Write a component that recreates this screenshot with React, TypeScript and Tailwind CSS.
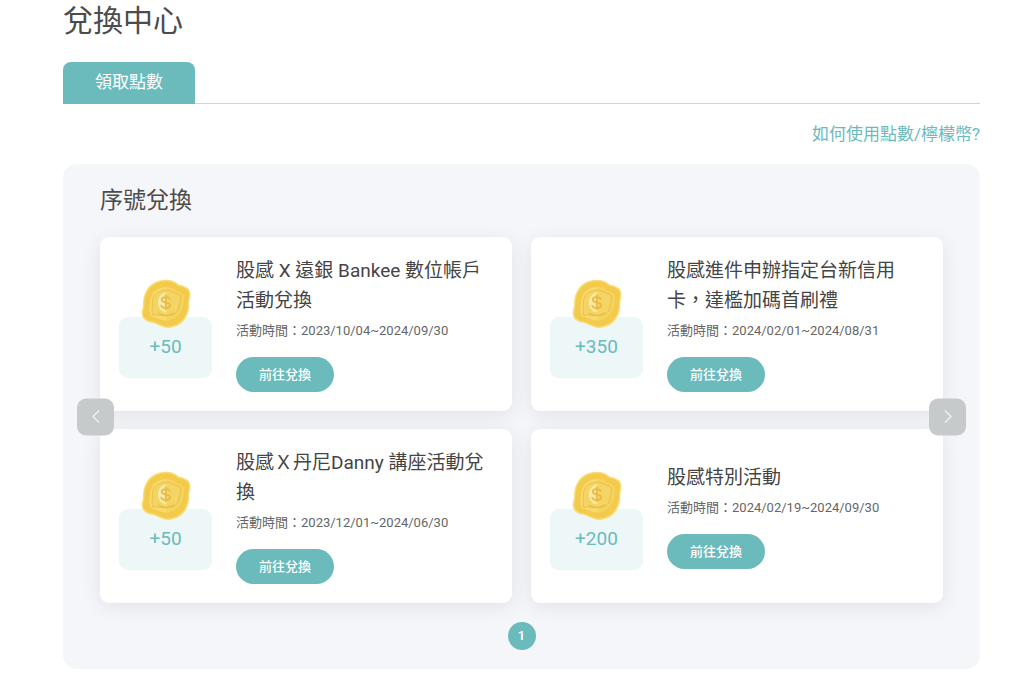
type Activity = {
  title: string;
  period: string;
  points: number;
};

const activities: Activity[] = [
  { title: "股感 X 遠銀 Bankee 數位帳戶\n活動兌換", period: "2023/10/04~2024/09/30", points: 50 },
  { title: "股感進件申辦指定台新信用\n卡，達檻加碼首刷禮", period: "2024/02/01~2024/08/31", points: 350 },
  { title: "股感Ｘ丹尼Danny 講座活動兌\n換", period: "2023/12/01~2024/06/30", points: 50 },
  { title: "股感特別活動", period: "2024/02/19~2024/09/30", points: 200 },
];

function Coin() {
  return (
    <svg viewBox="0 0 50 50" className="relative size-[50px]" aria-hidden="true">
      <path
        d="M25 .8C30.500 .8 34.500 2.500 38 5.800C44 6.300 49.500 9.500 49.500 15C49.500 18.500 48.300 21 48.300 25C48.300 32 46.500 38.500 41 43.500C36 48 30 49.500 24.500 48.700C19.500 48 16.500 45 11.500 43.800C5.500 43.500 .6 39.500 .6 34.500C.6 31.500 2 29 2 25C2 16.500 5 9.500 11 5C15 2 20 .8 25 .8Z"
        fill="#f8dc78"
      />
      <path
        d="M25 2.200C30 2.200 34 4 37.300 7.200C43 7.800 48 10.500 48 15C48 18.500 46.800 21 46.800 25C46.800 31.500 45 37.500 40 42.300C35.500 46.500 30 48 24.700 47.200C20 46.500 17 43.500 12 42.300C6.500 41.800 2.200 38.800 2.200 34.500C2.200 31.500 3.500 29 3.500 25C3.500 17 6.500 10.500 12 6.200C15.500 3.500 20 2.200 25 2.200Z"
        fill="#f4ca4a"
      />
      <path
        d="M25.500 8C30 8 33.500 10 37 12.500C41.500 14 43.500 16 43 20C42 24 42.500 28 40.500 32C38 37 33 40.500 27 41.500C22 42 18 40 14 38.500C10 37.500 8.500 35.500 8.500 32C9 27 8.500 22 10.500 17C13 11.500 18.500 8 25.500 8Z"
        fill="#f4d35f"
      />
      <path
        d="M25.500 8C18.500 8 13 11.500 10.500 17C8.500 22 9 27 8.500 32C8.500 35.500 10 37.500 14 38.500C18 40 21 41.600 25.500 41.500Z"
        fill="#f6da70"
      />
      <path
        d="M25.500 11C30.500 11.500 34.500 14.500 39.500 16.500C40.500 20.500 38.800 23 38.300 27C37.500 33 33.500 36.300 27.500 36.500C22 37 17 35.500 11.500 36C10.500 31 11.500 27 11.500 23C12 18 13 15.500 17 13.500C20 12 22.500 11 25.500 11Z"
        fill="#f4d464"
        stroke="#edc046"
        strokeWidth="1"
      />
      <path d="M25.500 13.500C20 14 17 18.500 17 23.500C17 28.500 20 33 25.500 33.500Z" fill="#faeaa9" />
      <path d="M17 34C21.500 37.300 29 37 33 33.500" fill="none" stroke="#ecbc40" strokeWidth="1.200" />
      <path
        d="M28.700 20C27.500 17.300 20.700 17.300 20.700 20.900C20.700 24.200 29 22.300 29 26.200C29 30 21.500 30 20.300 26.700M24.800 16V30.500"
        fill="none"
        stroke="#eabb42"
        strokeWidth="1.800"
        strokeLinecap="round"
      />
    </svg>
  );
}

function ActivityCard({ activity }: { activity: Activity }) {
  return (
    <li className="flex min-h-[174px] items-center gap-6 rounded-[9px] bg-white px-[19px] py-[18px] shadow-[0_4px_18px_rgba(60,60,60,0.1)]">
      <div className="mt-2 flex w-[93px] shrink-0 flex-col items-center">
        <Coin />
        <div className="-mt-3 flex h-[61px] w-full items-center justify-center rounded-[9px] bg-[#edf7f8] text-[19px] text-[#6bbabc]">
          +{activity.points}
        </div>
      </div>
      <div className="flex min-w-0 flex-1 flex-col items-start">
        <h3 className="text-[19px] leading-[30px] whitespace-pre-line text-[#444444]">{activity.title}</h3>
        <p className="mt-[5px] text-[13px] leading-5 text-[#666666]">活動時間：{activity.period}</p>
        <button
          type="button"
          className="mt-4 h-[35px] rounded-full bg-[#6bbabc] px-[23px] text-[13px] font-medium text-white"
        >
          前往兌換
        </button>
      </div>
    </li>
  );
}

function ArrowButton({ direction }: { direction: "prev" | "next" }) {
  const prev = direction === "prev";
  return (
    <button
      type="button"
      aria-label={prev ? "上一頁" : "下一頁"}
      className={`absolute top-1/2 flex size-[37px] -translate-y-1/2 items-center justify-center rounded-[9px] bg-[#c7caca] ${
        prev ? "left-[14px]" : "right-[14px]"
      }`}
    >
      <svg viewBox="0 0 8 14" className="h-[14px] w-2" fill="none" stroke="#f3f4f4" strokeWidth="1.200" aria-hidden="true">
        <path d={prev ? "M7 1L1 7L7 13" : "M1 1L7 7L1 13"} />
      </svg>
    </button>
  );
}

export default function App() {
  return (
    <main
      lang="zh-Hant"
      className="min-h-screen bg-white pr-11 pb-[27px] pl-[63px] font-['Roboto','Noto_Sans_CJK_TC',sans-serif] text-[#4c4c4c]"
    >
      <h1 className="text-[30px] leading-[42px]">兌換中心</h1>
      <div className="mt-5 flex border-b border-[#d3d3d3]" role="tablist">
        <button
          type="button"
          role="tab"
          aria-selected="true"
          className="-mb-px h-[42px] rounded-t-[8px] bg-[#6bbabc] px-8 text-[17px] text-white"
        >
          領取點數
        </button>
      </div>
      <div className="mt-4 flex justify-end">
        <a href="#guide" className="text-[17px] leading-7 text-[#6bbabc]">
          如何使用點數/檸檬幣?
        </a>
      </div>
      <section className="relative mt-4 rounded-[14px] bg-[#f5f6fa] px-[37px] pt-5 pb-[19px]">
        <h2 className="text-[23px] leading-[34px]">序號兌換</h2>
        <ul className="mt-[19px] grid grid-cols-2 gap-x-[19px] gap-y-[18px]">
          {activities.map((activity) => (
            <ActivityCard key={activity.title} activity={activity} />
          ))}
        </ul>
        <nav className="mt-[19px] flex justify-center" aria-label="分頁">
          <button
            type="button"
            aria-current="page"
            className="size-7 rounded-full bg-[#6bbabc] text-[13px] font-medium text-white"
          >
            1
          </button>
        </nav>
        <ArrowButton direction="prev" />
        <ArrowButton direction="next" />
      </section>
    </main>
  );
}
